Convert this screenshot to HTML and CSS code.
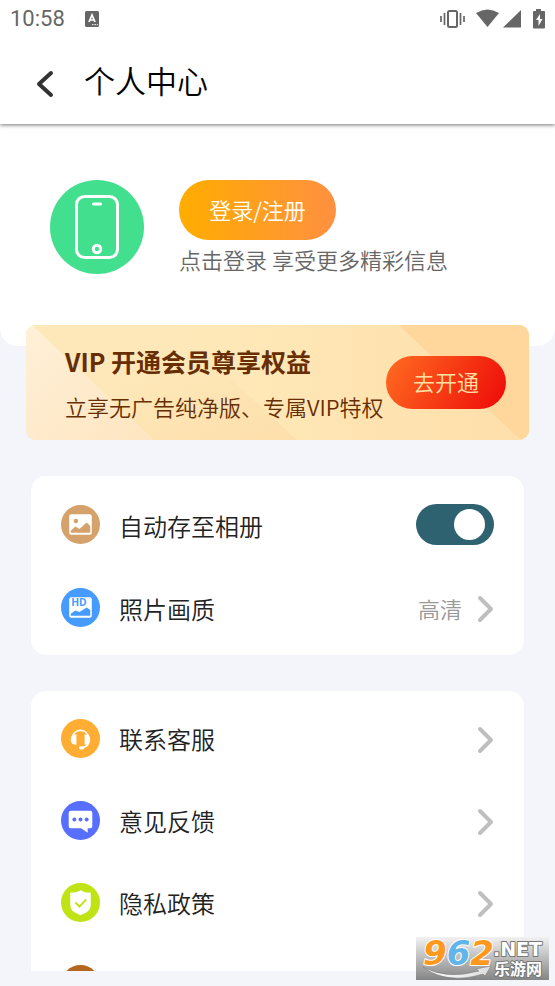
FILE: index.html
```html
<!DOCTYPE html>
<html lang="zh-CN">
<head>
<meta charset="utf-8">
<meta name="viewport" content="width=device-width, initial-scale=1">
<title>个人中心</title>
<link rel="stylesheet" href="styles.css">
</head>
<body>
<div class="app">
  <header class="topbar">
    <div class="status">
      <span class="time">10:58</span>
      <svg class="notice" width="14" height="16" viewBox="0 0 14 16" aria-hidden="true"><rect width="14" height="16" rx="1.5" fill="#666"/><path d="M4 11 7 4l3 7M5.200 9h3.600" fill="none" stroke="#fff" stroke-width="1.700"/><path d="M7 13.700h1.500m1 0H11m.8 0h1.200" stroke="#fff"/></svg>
      <svg class="signals" width="106" height="20" viewBox="0 0 106 20" fill="#666" aria-hidden="true">
        <rect x="8" y="2" width="9" height="16" rx="1.500" fill="none" stroke="#666" stroke-width="2"/>
        <path d="M4.500 4v12M1 7v6M20.500 4v12M24 7v6" stroke="#666" stroke-width="1.700"/>
        <path d="M36 4Q47.500-3 59 4L47.500 18Z"/>
        <path d="M63 18.500 81 1v17.500Z"/>
        <path fill-rule="evenodd" d="M96 0h5v2h3q1 0 1 1v15.500q0 1-1 1H94q-1 0-1-1V3q0-1 1-1h2ZM100 5l-4 6h2.500v6l4-7H100Z"/>
      </svg>
    </div>
    <div class="titlebar">
      <button class="back" type="button" aria-label="返回">
        <svg width="18" height="28" viewBox="0 0 18 28"><path d="M15 3 3 14l12 11" fill="none" stroke="#333" stroke-width="4" stroke-linecap="round" stroke-linejoin="round"/></svg>
      </button>
      <h1>个人中心</h1>
    </div>
  </header>
  <main class="content">
    <section class="profile">
      <svg class="avatar" width="94" height="94" viewBox="0 0 94 94" aria-hidden="true"><circle cx="47" cy="47" r="47" fill="#42e08e"/><g fill="none" stroke="#fff"><rect x="26.500" y="16.500" width="41" height="61" rx="8" stroke-width="3"/><path d="M43.500 24h7" stroke-width="3" stroke-linecap="round"/><circle cx="47" cy="69" r="3.700" stroke-width="3"/></g></svg>
      <div class="account">
        <button class="login" type="button">登录/注册</button>
        <p>点击登录 享受更多精彩信息</p>
      </div>
    </section>
    <section class="vip">
      <svg class="rays" viewBox="0 0 502 115" preserveAspectRatio="none" aria-hidden="true">
        <defs>
          <linearGradient id="a" x2="1" y2="1"><stop stop-color="#fff0d8"/><stop offset="1" stop-color="#fee5c0"/></linearGradient>
          <linearGradient id="b" x2="1" y2="1"><stop offset=".4" stop-color="#fee8b9"/><stop offset="1" stop-color="#fddfab"/></linearGradient>
          <linearGradient id="c" x2="1" y2="0"><stop offset=".4" stop-color="#ffe8b8"/><stop offset="1" stop-color="#fedfaa"/></linearGradient>
        </defs>
        <path fill="url(#c)" d="M0 0h502v115H0z"/>
        <path fill="url(#b)" d="M0 0h147l123 115H0z"/>
        <path fill="url(#a)" d="M0 0h6l122 115H0z"/>
        <path fill="#ffd69b" d="M372 0h130v115h-8z"/>
      </svg>
      <div class="pitch"><h2>VIP 开通会员尊享权益</h2><p>立享无广告纯净版、专属VIP特权</p></div>
      <button class="upgrade" type="button">去开通</button>
    </section>
    <section class="card settings">
      <div class="row">
        <svg class="icon" viewBox="0 0 38 38" aria-hidden="true"><circle cx="19" cy="19" r="19" fill="#d6a26b"/><rect x="8" y="9" width="22" height="20" rx="2" fill="#fff"/><circle cx="14.500" cy="15.500" r="2.200" fill="#d6a26b"/><path fill="#d6a26b" d="M9.500 27v-2l4.500-4 4 2.500 7-6.500 3.500 3.500V27z"/></svg>
        <label class="label" for="autosave">自动存至相册</label>
        <input class="switch" id="autosave" type="checkbox" role="switch" checked>
      </div>
      <button class="row" type="button">
        <svg class="icon" viewBox="0 0 38 38" aria-hidden="true"><circle cx="19" cy="19" r="19" fill="#459bff"/><rect x="8" y="9" width="22" height="20" rx="2" fill="#fff"/><path fill="#459bff" d="M9.500 27v-2l4.500-3 4 1.500 7-4.500 3.500 2.500V27z"/><text class="hd" x="10" y="18">HD</text></svg>
        <span class="label">照片画质</span><span class="value">高清</span>
        <svg class="chevron" viewBox="0 0 17 28" aria-hidden="true"><path d="m3 3 11 11L3 25"/></svg>
      </button>
    </section>
    <nav class="card">
      <a class="row" href="#service">
        <svg class="icon" viewBox="0 0 38 38" aria-hidden="true"><circle cx="19" cy="19" r="19" fill="#ffad33"/><path d="M11.500 17a7.600 7 0 0 1 15 0M27 22.500q-1 4.500-6.500 5.500" fill="none" stroke="#fff" stroke-width="1.700"/><path fill="#fff" d="M15 15v10h-1q-4.500 0-4.500-5t4.500-5zM23 15v10h1q4.500 0 4.500-5T24 15z"/><rect x="17.500" y="26.500" width="5" height="3.200" rx="1.600" fill="#fff"/></svg>
        <span class="label">联系客服</span>
        <svg class="chevron" viewBox="0 0 17 28" aria-hidden="true"><path d="m3 3 11 11L3 25"/></svg>
      </a>
      <a class="row" href="#feedback">
        <svg class="icon" viewBox="0 0 38 38" aria-hidden="true"><circle cx="19" cy="19" r="19" fill="#576eff"/><path fill="#fff" d="M10 9.500h18.500q2 0 2 2V24.500q0 2-2 2H26v4.500l-6.500-4.500H9.500q-2 0-2-2v-13q0-2 2.500-2z"/><g fill="#576eff"><circle cx="13" cy="18" r="1.900"/><circle cx="19" cy="18" r="1.900"/><circle cx="25" cy="18" r="1.900"/></g></svg>
        <span class="label">意见反馈</span>
        <svg class="chevron" viewBox="0 0 17 28" aria-hidden="true"><path d="m3 3 11 11L3 25"/></svg>
      </a>
      <a class="row" href="#privacy">
        <svg class="icon" viewBox="0 0 38 38" aria-hidden="true"><circle cx="19" cy="19" r="19" fill="#bfe315"/><path fill="#fff" d="M19 7q4 2.500 10 2.500V21q0 5-4 7.500l-6 3-6-3Q9 26 9 21V9.500Q15 9.500 19 7z"/><path d="m14 19 4 4 6.500-7" fill="none" stroke="#bfe315" stroke-width="1.800"/></svg>
        <span class="label">隐私政策</span>
        <svg class="chevron" viewBox="0 0 17 28" aria-hidden="true"><path d="m3 3 11 11L3 25"/></svg>
      </a>
      <div class="row">
        <svg class="icon" viewBox="0 0 38 38" aria-hidden="true"><circle cx="19" cy="19" r="19" fill="#b3661e"/></svg>
      </div>
    </nav>
  </main>
  <svg class="watermark" width="133" height="43" viewBox="0 0 133 43" role="img" aria-label="962.NET 乐游网">
    <defs>
      <linearGradient id="shade" x2="0" y2="1"><stop stop-color="#f1f1f1"/><stop offset="1" stop-color="#858585"/></linearGradient>
      <linearGradient id="swoosh" x2="1"><stop stop-color="#fff"/><stop offset="1" stop-color="#ddd"/></linearGradient>
    </defs>
    <rect width="133" height="43" fill="url(#shade)"/>
    <path d="M7 30q23 13 56 4l-3-2 15-3-6 10-2-2Q31 48 7 30z" fill="url(#swoosh)" stroke="#777" stroke-width=".5"/>
    <text class="brand" x="7" y="28"><tspan fill="#ff981f">9</tspan><tspan fill="#62b5e8">6</tspan><tspan fill="#ff981f">2</tspan></text>
    <text class="net" x="77" y="19">.NET</text>
    <text class="site" x="78" y="38">乐游网</text>
  </svg>
</div>
</body>
</html>
```
FILE: styles.css
```css
* { box-sizing: border-box; }
body {
  margin: 0;
  background: #f4f5fa;
  color: #222;
  font-family: "Noto Sans CJK SC", sans-serif;
  font-weight: 350;
}
h1, h2, p { margin: 0; font-weight: 350; }
button { border: 0; padding: 0; background: none; font: inherit; color: inherit; cursor: pointer; }
a { color: inherit; text-decoration: none; }
svg { display: block; flex: none; }

.app { position: relative; display: flex; flex-direction: column; height: 100vh; padding-bottom: 15px; overflow: hidden; }
.topbar { position: relative; z-index: 1; flex: none; background: #fff; box-shadow: 0 1px 4px rgba(0, 0, 0, .55); }
.status { display: flex; align-items: center; height: 38px; padding: 0 9px 0 10px; }
.time { font: 22px/38px Roboto, sans-serif; color: #666; }
.notice { margin-left: 20px; }
.signals { margin-left: auto; }
.titlebar { display: flex; align-items: center; gap: 30px; height: 86px; padding: 0 36px; }
.back { display: flex; align-items: center; padding-top: 6px; }
h1 { padding-bottom: 2px; font-size: 31px; line-height: 44px; color: #000; }

.content { flex: 1; min-height: 0; overflow: hidden; }
.profile { display: flex; gap: 35px; height: 222px; padding: 56px 50px 0; border-radius: 0 0 18px 18px; background: #fff; }
.account { display: flex; flex-direction: column; align-items: flex-start; }
.login { width: 157px; height: 60px; padding-bottom: 3px; border-radius: 30px; background: linear-gradient(90deg, #ffad00, #ff9040); font-size: 22px; color: #fff; }
.account p { font-size: 22px; line-height: 38px; color: #666; white-space: nowrap; }

.vip { position: relative; display: flex; align-items: center; justify-content: space-between; height: 115px; margin: -21px 26px 36px; padding: 0 23px 0 39px; border-radius: 10px; overflow: hidden; }
.rays { position: absolute; inset: 0; width: 100%; height: 100%; }
.pitch { position: relative; color: #672e04; white-space: nowrap; }
h2 { font-size: 25px; line-height: 46px; font-weight: 700; }
.pitch p { font-size: 22px; line-height: 44px; }
.upgrade { position: relative; flex: none; width: 120px; height: 53px; padding-bottom: 3px; border-radius: 27px; background: linear-gradient(120deg, #ff6d20, #ee0909); font-size: 22px; color: #fee0a4; }

.card { margin: 0 31px 36px; padding: 6px 30px; border-radius: 15px; background: #fff; }
.row { display: flex; align-items: center; width: 100%; height: 82px; text-align: left; }
.settings { padding-top: 7px; }
.settings .row { height: 83px; }
.icon { width: 39px; height: 39px; margin-right: 19px; }
.hd { font: 700 10px "Open Sans", sans-serif; fill: #459bff; }
.label { flex: 1; padding-top: 2px; font-size: 24px; line-height: 36px; }
.value { margin-right: 15px; font-size: 22px; color: #999; }
.chevron { width: 17px; height: 28px; margin-top: 3px; fill: none; stroke: #bfbfbf; stroke-width: 4; stroke-linecap: round; stroke-linejoin: round; }
.switch { appearance: none; display: flex; align-items: center; justify-content: flex-end; width: 78px; height: 41px; margin: 0; padding: 0 9px; border-radius: 21px; background: #2e6271; cursor: pointer; }
.switch::before { content: ""; width: 31px; height: 31px; border-radius: 50%; background: #fff; }
.switch:not(:checked) { justify-content: flex-start; background: #bbb; }

.watermark { position: absolute; right: 6px; bottom: 6px; z-index: 2; overflow: visible; }
.watermark text { paint-order: stroke; stroke-linejoin: round; }
.brand { font: italic 700 34px "DejaVu Sans", sans-serif; stroke: #fff; stroke-width: 2; }
.net { font: 700 19px "DejaVu Sans", sans-serif; fill: #fff; stroke: #777; stroke-width: 2; }
.site { font: 700 16px "Noto Sans CJK SC", sans-serif; fill: #fff; stroke: #777; stroke-width: 2; }
```
